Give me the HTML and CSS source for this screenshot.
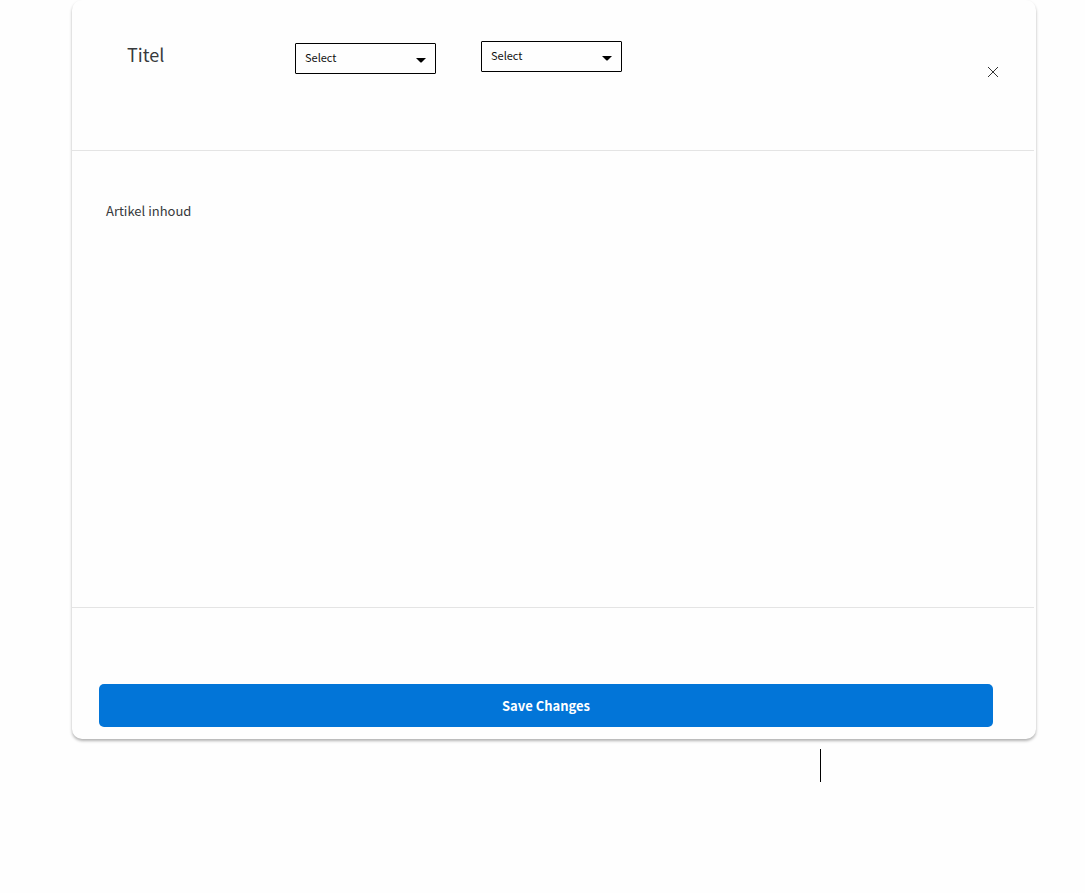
FILE: index.html
```html
<!DOCTYPE html>
<html lang="nl">
<head>
<meta charset="utf-8">
<meta name="viewport" content="width=device-width, initial-scale=1">
<title>Titel</title>
<link rel="stylesheet" href="styles.css">
</head>
<body>
<main class="page">
  <form class="card">
    <header class="card-header">
      <h1 class="title">Titel</h1>
      <div class="select-box select-first">
        <select class="select" aria-label="Eerste keuze"><option>Select</option></select>
        <svg class="caret" viewBox="0 0 10 5" aria-hidden="true"><path d="M0 0H10L6 4Q5 5 4 4Z"/></svg>
      </div>
      <div class="select-box">
        <select class="select" aria-label="Tweede keuze"><option>Select</option></select>
        <svg class="caret" viewBox="0 0 10 5" aria-hidden="true"><path d="M0 0H10L6 4Q5 5 4 4Z"/></svg>
      </div>
      <button class="close" type="button" aria-label="Sluiten">
        <svg class="close-icon" viewBox="0 0 12 12" aria-hidden="true"><path d="M1 1L11 11M11 1L1 11"/></svg>
      </button>
    </header>
    <section class="card-body">
      <p class="content">Artikel inhoud</p>
    </section>
    <footer class="card-footer">
      <button class="save" type="button">Save Changes</button>
    </footer>
  </form>
  <div class="marker"></div>
</main>
</body>
</html>
```
FILE: styles.css
```css
* { box-sizing: border-box; }

body {
  margin: 0;
  background: #fefefe;
  color: #373a3c;
  font-family: "Noto Sans CJK SC", "Noto Sans", sans-serif;
}

.page { padding: 0 49px 0 72px; }

.card {
  background: #fefefe;
  border-radius: 10px;
  box-shadow: 0 2px 3px rgba(0, 0, 0, 0.3);
}

.card-header {
  display: flex;
  align-items: flex-start;
  min-height: 151px;
  margin-right: 2px;
  padding: 41px 35px 0 55px;
  border-bottom: 1px solid #e4e4e4;
}

.title {
  width: 168px;
  margin: 0;
  font-size: 18px;
  font-weight: 400;
  line-height: 26px;
}

.select-box {
  display: grid;
  width: 141px;
}

.select-first { margin: 2px 45px 0 0; }

.select {
  grid-area: 1 / 1;
  height: 31px;
  padding: 0 9px 3px;
  border: 1px solid #000;
  border-radius: 1px;
  appearance: none;
  background: #fefefe;
  color: #111;
  font-family: inherit;
  font-size: 11px;
}

.caret {
  grid-area: 1 / 1;
  place-self: center end;
  width: 10px;
  height: 5px;
  margin: 4px 10px 0 0;
  pointer-events: none;
}

.close {
  display: flex;
  margin: 25px 0 0 auto;
  padding: 0;
  border: 0;
  background: none;
}

.close-icon {
  width: 12px;
  height: 12px;
  fill: none;
  stroke: #333;
}

.card-body {
  min-height: 457px;
  margin-right: 2px;
  padding: 50px 34px;
  border-bottom: 1px solid #e4e4e4;
}

.content {
  margin: 0;
  font-size: 13px;
  line-height: 20px;
}

.card-footer { padding: 76px 43px 12px 27px; }

.save {
  display: block;
  width: 100%;
  height: 43px;
  padding: 0;
  border: 0;
  border-radius: 5px;
  background: #0275d8;
  color: #fff;
  font-family: inherit;
  font-size: 13px;
  font-weight: 700;
}

.marker {
  width: 1px;
  height: 33px;
  margin: 10px 215px 0 auto;
  background: #000;
}
```
